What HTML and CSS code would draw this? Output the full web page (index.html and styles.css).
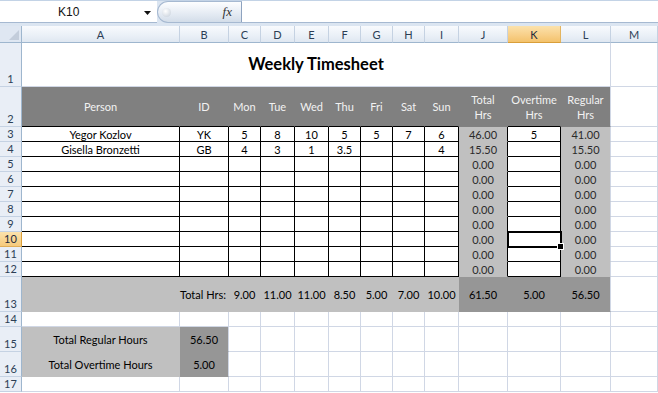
FILE: index.html
```html
<!DOCTYPE html>
<html>
<head>
<meta charset="utf-8">
<link rel="stylesheet" href="styles.css">
</head>
<body>
<div class="fbar">
  <div class="namebox">
    <span class="ref">K10</span>
    <svg class="dd" width="7" height="4" viewBox="0 0 7 4"><path d="M0 0h7L3.5 4z" fill="#111"/></svg>
  </div>
  <div class="fxbtn">
    <span class="grip"></span>
    <span class="fx">fx</span>
  </div>
  <div class="finput"></div>
</div>
<div class="sheet">
  <div class="corner"><svg width="10" height="10" viewBox="0 0 10 10"><path d="M10 0v10H0z" fill="#c3cddb"/></svg></div>
  <div class="ch">A</div><div class="ch">B</div><div class="ch">C</div><div class="ch">D</div><div class="ch">E</div><div class="ch">F</div><div class="ch">G</div><div class="ch">H</div><div class="ch">I</div><div class="ch">J</div><div class="ch sel">K</div><div class="ch">L</div><div class="ch">M</div>

  <div class="rh">1</div><div class="c title">Weekly Timesheet</div><div class="c"></div>

  <div class="rh">2</div>
  <div class="c hd">Person</div><div class="c hd">ID</div><div class="c hd">Mon</div><div class="c hd">Tue</div><div class="c hd">Wed</div><div class="c hd">Thu</div><div class="c hd">Fri</div><div class="c hd">Sat</div><div class="c hd">Sun</div><div class="c hd gj">Total<br>Hrs</div><div class="c hd">Overtime<br>Hrs</div><div class="c hd gl">Regular<br>Hrs</div><div class="c"></div>

  <div class="rh">3</div>
  <div class="c d">Yegor Kozlov</div><div class="c d">YK</div><div class="c d">5</div><div class="c d">8</div><div class="c d">10</div><div class="c d">5</div><div class="c d">5</div><div class="c d">7</div><div class="c d">6</div><div class="c tot tj">46.00</div><div class="c d">5</div><div class="c tot">41.00</div><div class="c"></div>

  <div class="rh">4</div>
  <div class="c d">Gisella Bronzetti</div><div class="c d">GB</div><div class="c d">4</div><div class="c d">3</div><div class="c d">1</div><div class="c d">3.5</div><div class="c d"></div><div class="c d"></div><div class="c d">4</div><div class="c tot tj">15.50</div><div class="c d"></div><div class="c tot">15.50</div><div class="c"></div>

  <div class="rh">5</div>
  <div class="c d"></div><div class="c d"></div><div class="c d"></div><div class="c d"></div><div class="c d"></div><div class="c d"></div><div class="c d"></div><div class="c d"></div><div class="c d"></div><div class="c tot tj">0.00</div><div class="c d"></div><div class="c tot">0.00</div><div class="c"></div>

  <div class="rh">6</div>
  <div class="c d"></div><div class="c d"></div><div class="c d"></div><div class="c d"></div><div class="c d"></div><div class="c d"></div><div class="c d"></div><div class="c d"></div><div class="c d"></div><div class="c tot tj">0.00</div><div class="c d"></div><div class="c tot">0.00</div><div class="c"></div>

  <div class="rh">7</div>
  <div class="c d"></div><div class="c d"></div><div class="c d"></div><div class="c d"></div><div class="c d"></div><div class="c d"></div><div class="c d"></div><div class="c d"></div><div class="c d"></div><div class="c tot tj">0.00</div><div class="c d"></div><div class="c tot">0.00</div><div class="c"></div>

  <div class="rh">8</div>
  <div class="c d"></div><div class="c d"></div><div class="c d"></div><div class="c d"></div><div class="c d"></div><div class="c d"></div><div class="c d"></div><div class="c d"></div><div class="c d"></div><div class="c tot tj">0.00</div><div class="c d"></div><div class="c tot">0.00</div><div class="c"></div>

  <div class="rh">9</div>
  <div class="c d"></div><div class="c d"></div><div class="c d"></div><div class="c d"></div><div class="c d"></div><div class="c d"></div><div class="c d"></div><div class="c d"></div><div class="c d"></div><div class="c tot tj">0.00</div><div class="c d"></div><div class="c tot">0.00</div><div class="c"></div>

  <div class="rh selrow">10</div>
  <div class="c d"></div><div class="c d"></div><div class="c d"></div><div class="c d"></div><div class="c d"></div><div class="c d"></div><div class="c d"></div><div class="c d"></div><div class="c d"></div><div class="c tot tj">0.00</div><div class="c d active"><span class="cursor"></span><span class="handle"></span></div><div class="c tot">0.00</div><div class="c"></div>

  <div class="rh">11</div>
  <div class="c d"></div><div class="c d"></div><div class="c d"></div><div class="c d"></div><div class="c d"></div><div class="c d"></div><div class="c d"></div><div class="c d"></div><div class="c d"></div><div class="c tot tj">0.00</div><div class="c d"></div><div class="c tot">0.00</div><div class="c"></div>

  <div class="rh">12</div>
  <div class="c d"></div><div class="c d"></div><div class="c d"></div><div class="c d"></div><div class="c d"></div><div class="c d"></div><div class="c d"></div><div class="c d"></div><div class="c d"></div><div class="c tot tj">0.00</div><div class="c d"></div><div class="c tot">0.00</div><div class="c"></div>

  <div class="rh">13</div>
  <div class="c s1"></div><div class="c s1 right">Total Hrs:</div><div class="c s1">9.00</div><div class="c s1">11.00</div><div class="c s1">11.00</div><div class="c s1">8.50</div><div class="c s1">5.00</div><div class="c s1">7.00</div><div class="c s1">10.00</div><div class="c s2">61.50</div><div class="c s2">5.00</div><div class="c s2 last">56.50</div><div class="c"></div>

  <div class="rh">14</div>
  <div class="c"></div><div class="c"></div><div class="c"></div><div class="c"></div><div class="c"></div><div class="c"></div><div class="c"></div><div class="c"></div><div class="c"></div><div class="c"></div><div class="c"></div><div class="c"></div><div class="c"></div>

  <div class="rh">15</div>
  <div class="c s1">Total Regular Hours</div><div class="c s2 sb">56.50</div><div class="c"></div><div class="c"></div><div class="c"></div><div class="c"></div><div class="c"></div><div class="c"></div><div class="c"></div><div class="c"></div><div class="c"></div><div class="c"></div><div class="c"></div>

  <div class="rh">16</div>
  <div class="c s1">Total Overtime Hours</div><div class="c s2 sb">5.00</div><div class="c"></div><div class="c"></div><div class="c"></div><div class="c"></div><div class="c"></div><div class="c"></div><div class="c"></div><div class="c"></div><div class="c"></div><div class="c"></div><div class="c"></div>

  <div class="rh">17</div>
  <div class="c"></div><div class="c"></div><div class="c"></div><div class="c"></div><div class="c"></div><div class="c"></div><div class="c"></div><div class="c"></div><div class="c"></div><div class="c"></div><div class="c"></div><div class="c"></div><div class="c"></div>
</div>
</body>
</html>
```
FILE: styles.css
```css
html, body {
  margin: 0;
  padding: 0;
  background: #ffffff;
}
body {
  width: 658px;
  height: 393px;
  overflow: hidden;
  font-family: Lato, "Liberation Sans", sans-serif;
}
.fbar {
  height: 26px;
  box-sizing: border-box;
  display: flex;
  align-items: flex-start;
  background: #dbe5f1;
  border-top: 1px solid #c3d3e6;
}
.namebox {
  width: 157px;
  height: 22px;
  box-sizing: border-box;
  background: #ffffff;
  border-bottom: 1px solid #a6b9d1;
  display: flex;
  align-items: center;
  position: relative;
}
.ref {
  font-family: "Liberation Sans", sans-serif;
  font-size: 12px;
  color: #111;
  margin-left: 58px;
}
.dd {
  position: absolute;
  left: 144px;
  top: 10px;
}
.fxbtn {
  width: 85px;
  height: 22px;
  box-sizing: border-box;
  border: 1px solid #a6b9d1;
  border-right-color: #8ea3bf;
  border-radius: 11px 0 0 11px;
  background: linear-gradient(#fdfeff, #e6ecf4 55%, #d3dde9);
  display: flex;
  align-items: center;
  position: relative;
}
.grip {
  width: 9px;
  height: 9px;
  border-radius: 50%;
  background: radial-gradient(circle at 40% 35%, #ffffff, #c2ccd8);
  margin-left: 4px;
}
.fx {
  font-family: "Liberation Serif", serif;
  font-style: italic;
  font-size: 13px;
  color: #333;
  margin-left: auto;
  margin-right: 9px;
}
.finput {
  flex: 1;
  height: 22px;
  box-sizing: border-box;
  background: #ffffff;
  border-bottom: 1px solid #a6b9d1;
}
.sheet {
  display: grid;
  grid-template-columns: 22px 158px 49px 32px 34px 34px 32px 32px 32px 34px 49px 53px 50px 47px;
  grid-template-rows: 17px 44px 40px repeat(10, 15px) 35px 15px 25px 25px 15px;
  font-size: 11px;
  color: #000;
}
.corner {
  box-sizing: border-box;
  background: #dfe7f2;
  border-right: 1px solid #9eb6ce;
  border-bottom: 1px solid #9eb6ce;
  display: flex;
  align-items: flex-end;
  justify-content: flex-end;
  padding: 0 2px 2px 0;
}
.ch {
  box-sizing: border-box;
  background: linear-gradient(#f8fafd, #eaf0f7 60%, #dfe7f1);
  border-right: 1px solid #c5d2e2;
  border-bottom: 1px solid #9eb6ce;
  color: #2c3e55;
  display: flex;
  align-items: center;
  justify-content: center;
  line-height: 13px;
}
.ch.sel {
  background: linear-gradient(#fbe2ac, #f8d08a 55%, #f3c26b);
  border-right-color: #e3b45f;
  border-bottom-color: #d99e39;
  color: #1c2a3c;
}
.rh {
  box-sizing: border-box;
  background: #e9eef6;
  border-right: 1px solid #9eb6ce;
  border-bottom: 1px solid #c5d2e3;
  color: #2c3e55;
  display: flex;
  align-items: flex-end;
  justify-content: center;
  line-height: 12px;
  padding-bottom: 1px;
}
.rh.selrow {
  background: linear-gradient(#fbe2ac, #f6ca7c);
  border-bottom-color: #e0ad57;
  border-right-color: #d99e39;
  color: #1c2a3c;
}
.c {
  box-sizing: border-box;
  border-right: 1px solid #d0d7e5;
  border-bottom: 1px solid #d0d7e5;
  display: flex;
  align-items: center;
  justify-content: center;
  white-space: nowrap;
  line-height: 13px;
}
.title {
  grid-column: span 12;
  font-weight: bold;
  font-size: 16.5px;
}
.hd {
  background: #808080;
  color: #f2f2f2;
  border-right-color: #808080;
  border-bottom-color: #000;
  text-align: center;
  line-height: 15px;
}
.hd.gj {
  border-bottom-color: #808080;
}
.hd.gl {
  border-bottom-color: #808080;
  border-right-color: #d0d7e5;
}
.d {
  border-right-color: #000;
  border-bottom-color: #000;
}
.tot {
  background: #c0c0c0;
  border-right-color: #d0d7e5;
  border-bottom-color: #c0c0c0;
  color: #2a2a2a;
}
.tot.tj {
  border-right-color: #000;
}
.s1 {
  background: #c0c0c0;
  border-right-color: #c0c0c0;
  border-bottom-color: #c0c0c0;
}
.s2 {
  background: #969696;
  border-right-color: #969696;
  border-bottom-color: #969696;
}
.s2.last {
  border-right-color: #d0d7e5;
}
.s2.sb {
  border-right-color: #d0d7e5;
}
.right {
  justify-content: flex-end;
  padding-right: 2px;
}
.active {
  position: relative;
}
.cursor {
  position: absolute;
  left: -1px;
  top: -1px;
  right: -2px;
  bottom: -2px;
  border: 2px solid #000;
  box-shadow: inset 0 0 0 1px #fff;
}
.handle {
  position: absolute;
  right: -4px;
  bottom: -4px;
  width: 5px;
  height: 5px;
  background: #000;
  border: 1px solid #fff;
}
```
